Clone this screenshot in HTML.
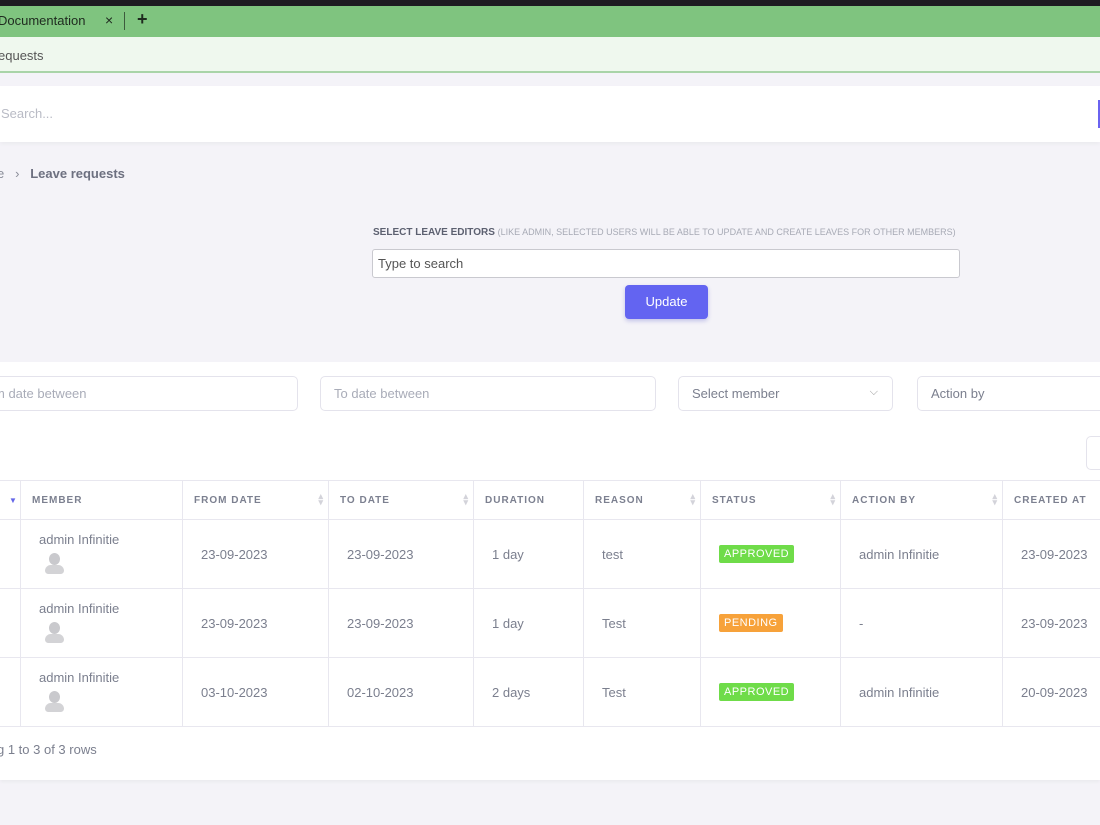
<!DOCTYPE html>
<html><head><meta charset="utf-8"><style>
*{box-sizing:border-box;margin:0;padding:0}
body{width:1100px;height:825px;overflow:hidden;background:#f4f3f8;font-family:"Liberation Sans",sans-serif;position:relative;color:#6b6f80}
.abs{position:absolute}
.inp{position:absolute;background:#fff;border:1px solid #e4e3ec;border-radius:5px;font-size:13px;color:#a9acb8;padding:0 13px;line-height:34px}
table{position:absolute;left:-10px;top:480px;border-collapse:collapse;font-size:13px;table-layout:fixed;width:1132px}
th{height:39px;border:1px solid #e8e7ef;font-size:10px;letter-spacing:1px;color:#7c8090;text-align:left;padding-left:11px;font-weight:bold;position:relative}
th .s{position:absolute;right:4px;top:12px;color:#d3d3da;font-size:9px;line-height:6px}
td{height:69px;border:1px solid #e8e7ef;color:#7b7f8e;padding-left:18px}
.b{display:inline-block;color:#fff;font-size:11px;padding:3px 5px;border-radius:2px;letter-spacing:.5px}
.av{width:20px;height:22px;position:relative;margin-top:6px;margin-left:5px}
.av:before{content:"";position:absolute;left:5px;top:0;width:11px;height:12px;border-radius:50%;background:#c9c9cd}
.av:after{content:"";position:absolute;left:1px;top:12px;width:19px;height:9px;border-radius:9px 9px 5px 5px;background:#d3d3d6}
</style></head><body>
<div class="abs" style="left:0;top:0;width:1100px;height:6px;background:#1e1c22"></div>
<div class="abs" style="left:0;top:6px;width:1100px;height:31px;background:#7fc47f"></div>
<div class="abs" style="left:-2px;top:13px;font-size:13px;color:#1f2a1f">Documentation</div>
<div class="abs" style="left:105px;top:12px;font-size:14px;color:#1f2a1f">×</div>
<div class="abs" style="left:124px;top:12px;width:1px;height:18px;background:#3d5a3d"></div>
<div class="abs" style="left:137px;top:9px;font-size:18px;color:#1f2a1f;font-weight:bold">+</div>
<div class="abs" style="left:0;top:37px;width:1100px;height:36px;background:#eff8ee;border-bottom:2px solid #a9d4a8"></div>
<div class="abs" style="left:-2px;top:48px;font-size:13px;color:#555">equests</div>
<div class="abs" style="left:0;top:86px;width:1100px;height:56px;background:#fff;box-shadow:0 2px 4px rgba(0,0,0,.04)"></div>
<div class="abs" style="left:1px;top:106px;font-size:13px;color:#b9bbc5">Search...</div>
<div class="abs" style="left:1098px;top:100px;width:3px;height:28px;background:#6a63f0"></div>
<div class="abs" style="left:-3px;top:166px;font-size:13px;color:#8a8d99">e &nbsp; › &nbsp; <span style="color:#6d7080;font-weight:bold">Leave requests</span></div>
<div class="abs" style="left:373px;top:227px;font-size:10px;color:#5c6070;font-weight:bold;white-space:nowrap">SELECT LEAVE EDITORS <span style="font-weight:normal;color:#a7aab5;font-size:9px">(LIKE ADMIN, SELECTED USERS WILL BE ABLE TO UPDATE AND CREATE LEAVES FOR OTHER MEMBERS)</span></div>
<div class="abs" style="left:372px;top:249px;width:588px;height:29px;background:#fff;border:1px solid #c9c9cf;border-radius:3px;font-size:13px;color:#555;padding:6px 5px">Type to search</div>
<div class="abs" style="left:625px;top:285px;width:83px;height:34px;background:#6364f1;border-radius:4px;color:#fff;font-size:13px;text-align:center;line-height:34px;box-shadow:0 2px 4px rgba(80,80,200,.3)">Update</div>
<div class="abs" style="left:0;top:362px;width:1100px;height:418px;background:#fff;box-shadow:0 2px 3px rgba(0,0,0,.04)"></div>
<div class="inp" style="left:-20px;top:376px;width:318px;height:35px">m date between</div>
<div class="inp" style="left:320px;top:376px;width:336px;height:35px">To date between</div>
<div class="inp" style="left:678px;top:376px;width:215px;height:35px;color:#7b7f8e">Select member<span style="position:absolute;right:14px;top:-2px;font-size:11px;color:#999">⌵</span></div>
<div class="inp" style="left:917px;top:376px;width:200px;height:35px;color:#7b7f8e">Action by</div>
<div class="abs" style="left:1086px;top:436px;width:20px;height:34px;border:1px solid #e4e3ec;border-radius:5px"></div>
<table>
<colgroup><col style="width:30px"><col style="width:162px"><col style="width:146px"><col style="width:145px"><col style="width:110px"><col style="width:117px"><col style="width:140px"><col style="width:162px"><col style="width:120px"></colgroup>
<tr><th><span style="color:#6466e8;position:absolute;left:18px;top:15px;font-size:8px">▼</span></th><th>MEMBER</th><th>FROM DATE<span class="s">▴<br>▾</span></th><th>TO DATE<span class="s">▴<br>▾</span></th><th>DURATION</th><th>REASON<span class="s">▴<br>▾</span></th><th>STATUS<span class="s">▴<br>▾</span></th><th>ACTION BY<span class="s">▴<br>▾</span></th><th>CREATED AT</th></tr>
<tr><td></td><td style="vertical-align:top;padding-top:12px">admin Infinitie<div class="av"></div></td><td>23-09-2023</td><td>23-09-2023</td><td>1 day</td><td>test</td><td><span class="b" style="background:#6fdc49">APPROVED</span></td><td>admin Infinitie</td><td>23-09-2023</td></tr>
<tr><td></td><td style="vertical-align:top;padding-top:12px">admin Infinitie<div class="av"></div></td><td>23-09-2023</td><td>23-09-2023</td><td>1 day</td><td>Test</td><td><span class="b" style="background:#f7a23a">PENDING</span></td><td>-</td><td>23-09-2023</td></tr>
<tr><td></td><td style="vertical-align:top;padding-top:12px">admin Infinitie<div class="av"></div></td><td>03-10-2023</td><td>02-10-2023</td><td>2 days</td><td>Test</td><td><span class="b" style="background:#6fdc49">APPROVED</span></td><td>admin Infinitie</td><td>20-09-2023</td></tr>
</table>
<div class="abs" style="left:-3px;top:742px;font-size:13px;color:#7b7f8e">g 1 to 3 of 3 rows</div>
</body></html>
